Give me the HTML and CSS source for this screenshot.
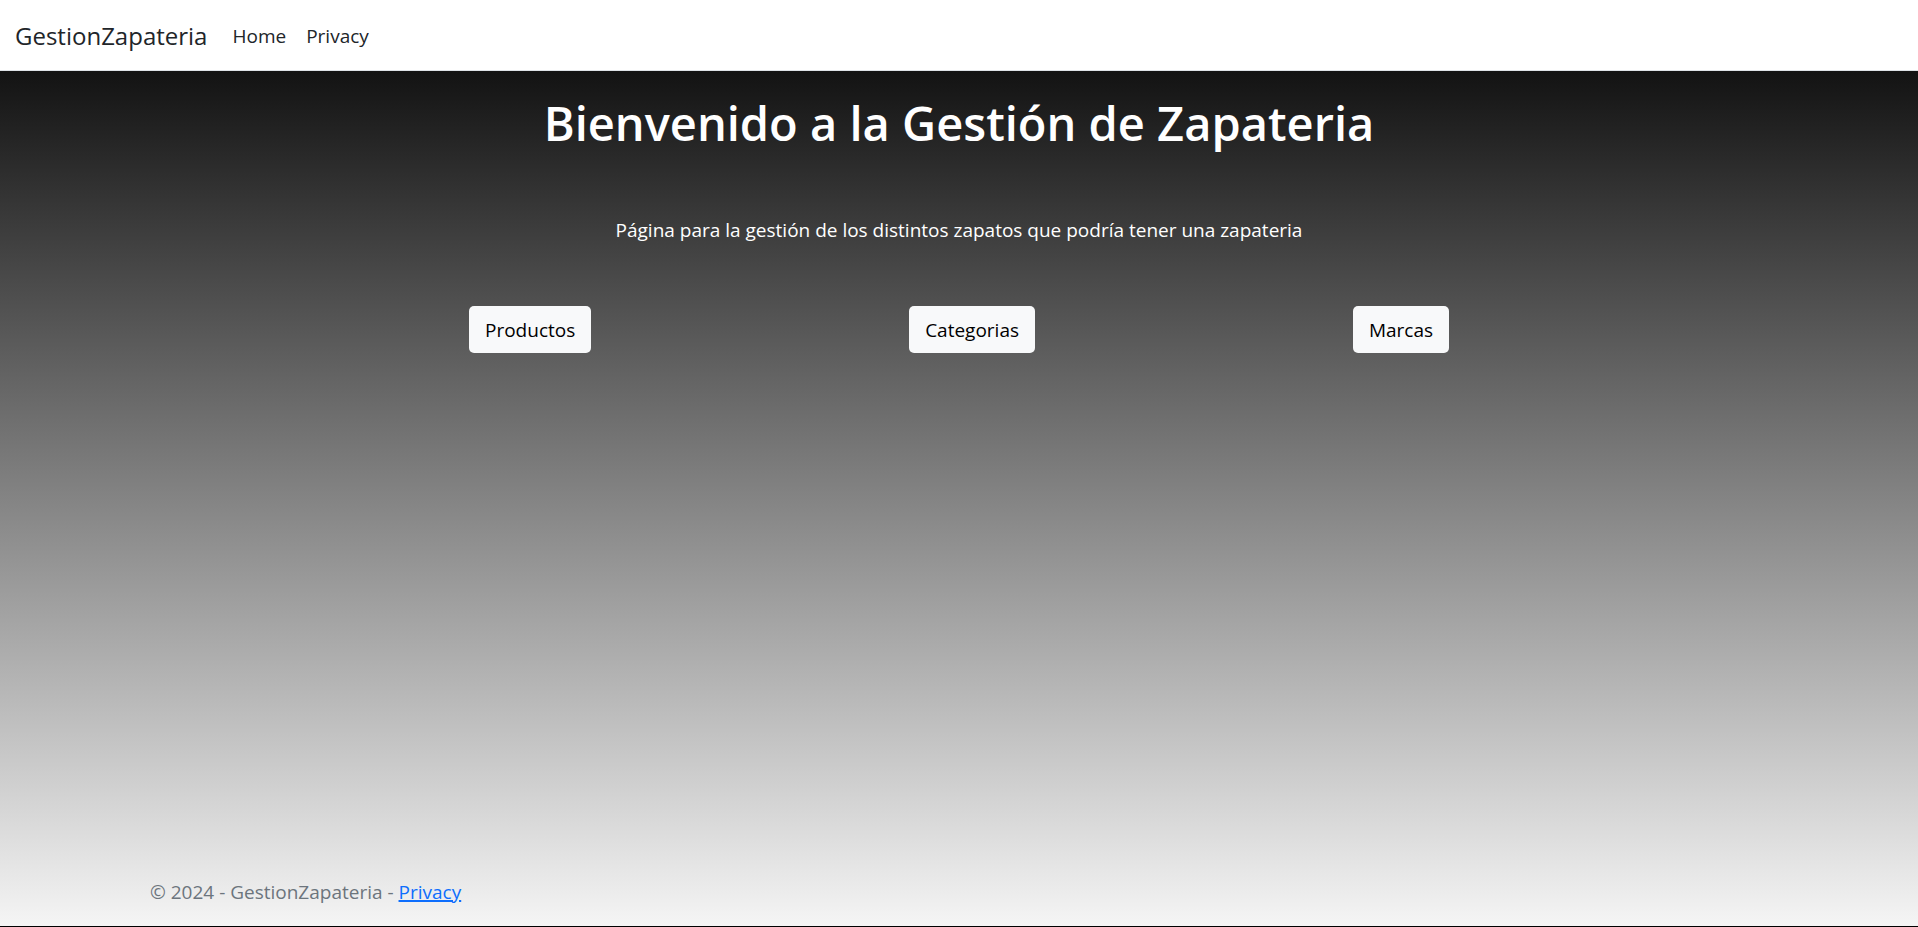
FILE: index.html
```html
<!DOCTYPE html>
<html lang="es">
<head>
<meta charset="utf-8">
<title>GestionZapateria</title>
<link rel="stylesheet" href="styles.css">
</head>
<body>
<header class="navbar">
  <a class="brand" href="#">GestionZapateria</a>
  <nav class="nav">
    <a class="nav-link" href="#">Home</a>
    <a class="nav-link" href="#">Privacy</a>
  </nav>
</header>
<main class="container">
  <h1 class="title">Bienvenido a la Gestión de Zapateria</h1>
  <p class="lead">Página para la gestión de los distintos zapatos que podría tener una zapateria</p>
  <div class="actions">
    <button class="btn" type="button">Productos</button>
    <button class="btn" type="button">Categorias</button>
    <button class="btn" type="button">Marcas</button>
  </div>
</main>
<footer class="footer">© 2024 - GestionZapateria - <a class="footer-link" href="#">Privacy</a></footer>
</body>
</html>
```
FILE: styles.css
```css
* { box-sizing: border-box; }
body {
  margin: 0;
  min-height: 100vh;
  display: flex;
  flex-direction: column;
  font: 19px/30px "Segoe UI", "Open Sans", "Noto Sans", sans-serif;
  color: #fff;
  background: linear-gradient(#000, #f5f5f5);
  border-bottom: 1px solid #000;
}
.navbar {
  display: flex;
  align-items: center;
  gap: 15px;
  padding: 11px 15px 9px;
  min-height: 71px;
  background: #fff;
  border-bottom: 1px solid #dee2e6;
}
.brand { font-size: 24px; color: #212529; text-decoration: none; }
.nav { display: flex; }
.nav-link { padding: 10px; color: #212529; text-decoration: none; }
.container { width: 100%; max-width: 1650px; margin: 0 auto; padding: 22px 15px; text-align: center; }
.title { margin: 0; font-size: 47px; line-height: 60px; font-weight: 600; }
.lead { margin: 62px 0 61px; font-weight: 500; }
.actions { display: flex; justify-content: space-between; width: 980px; max-width: 100%; margin: 0 auto; }
.btn { font: inherit; color: #000; background: #f8f9fa; border: 0; border-radius: 5px; padding: 9px 16px 8px; }
.footer { width: 100%; max-width: 1650px; margin: auto auto 0; padding: 0 16px 2px; line-height: 64px; color: #6c757d; }
.footer-link { color: #0d6efd; text-decoration-thickness: 2px; }
```
